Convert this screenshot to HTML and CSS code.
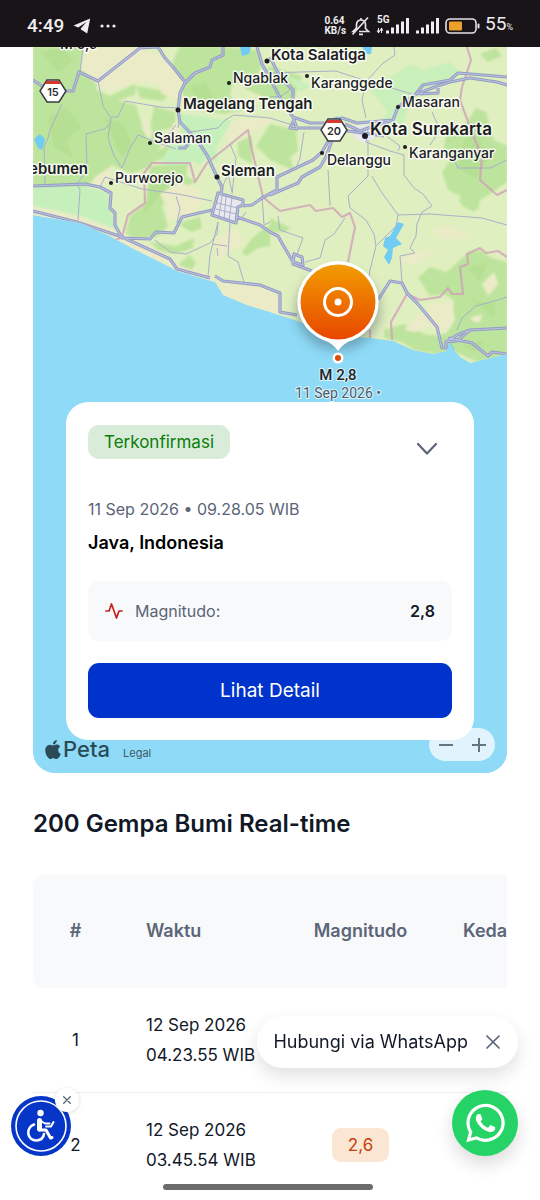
FILE: index.html
```html
<!DOCTYPE html>
<html lang="id">
<head>
<meta charset="utf-8">
<meta name="viewport" content="width=device-width, initial-scale=1">
<title>Gempa Bumi Real-time</title>
<link rel="stylesheet" href="styles.css">
</head>
<body>
<header class="status">
  <div class="status-side">
    <span class="clock">4:49</span>
    <svg width="18" height="16" viewBox="0 0 18 16" fill="#efedf0"><path d="M17.200 0.500 L0.500 7.600 L5.200 9.600 L13.500 4 L7.800 10.600 L7.900 11.400 L14.200 15.500 Z"/></svg>
    <svg width="16" height="4" viewBox="0 0 16 4" fill="#efedf0"><circle cx="2" cy="2" r="1.600"/><circle cx="8" cy="2" r="1.600"/><circle cx="14" cy="2" r="1.600"/></svg>
  </div>
  <div class="status-side status-right">
    <span class="rate">0.64<br>KB/s</span>
    <svg width="20" height="20" viewBox="0 0 20 20" fill="none" stroke="#e4e2e6" stroke-width="1.700"><path d="M5.500 14 V8.500 C5.500 2.500 14.500 2.500 14.500 8.500 V12.500 L17.500 15.500 H8 M5 15.500 H2 L5.500 12 M1.500 18.500 L17 1.500 M8 18.300 H12 M10 2 V4"/></svg>
    <span class="network"><span class="gen">5G</span>
      <svg width="34" height="17" viewBox="0 0 34 17" fill="#efedf0"><path d="M2.500 11 V15.500 M5.500 16 V11.500" stroke="#efedf0"/><path d="M.5 13.500 H4.500 L2.500 16.500 Z M3.500 13.500 H7.500 L5.500 10.500 Z"/><rect x="10" y="13.500" width="3" height="3"/><rect x="15" y="10.500" width="3" height="6"/><rect x="20" y="7.500" width="3" height="9"/><rect x="25" y="4.500" width="3" height="12"/><rect x="30" y="1" width="3" height="15.500"/></svg>
    </span>
    <svg width="25" height="17" viewBox="0 0 25 17" fill="#efedf0"><rect x="1" y="13.500" width="3" height="3"/><rect x="6" y="10.500" width="3" height="6"/><rect x="11" y="7.500" width="3" height="9"/><rect x="16" y="4.500" width="3" height="12"/><rect x="21" y="1" width="3" height="15.500"/></svg>
    <svg class="battery" width="35" height="16" viewBox="0 0 35 16"><rect x="1" y="1" width="30" height="14" rx="4" fill="none" stroke="#e4e2e6" stroke-width="1.600"/><rect x="4" y="3.500" width="13" height="9" rx="1" fill="#eba02b"/><rect x="32.500" y="5.500" width="2" height="5" rx="1" fill="#e4e2e6"/></svg>
    <span class="percent">55<small>%</small></span>
  </div>
</header>

<main class="page">
  <section class="map" aria-label="Peta gempa">
    <svg class="map-art" viewBox="33 47 474 726" preserveAspectRatio="xMidYMin slice">
      <defs>
        <linearGradient id="pin" x1="0" y1="0" x2="0" y2="1"><stop offset="0" stop-color="#f29c00"/><stop offset="1" stop-color="#e84700"/></linearGradient>
        <filter id="shade" x="-50%" y="-50%" width="200%" height="200%"><feGaussianBlur stdDeviation="6"/></filter>
        <filter id="soft"><feGaussianBlur stdDeviation="1.200"/></filter>
        <clipPath id="coast"><path d="M33 215 L80 223 L110 236 L130 247 L170 267 L177 271 L215 282 L223 295 L247 305 L270 312 L300 322 L336 336 L370 338 L393 341 L413 350 L433 354 L446 351 L450 344 L454 350 L460 357 L470 363 L490 358 L507 354 V40 H33 Z"/></clipPath>
      </defs>
      <rect x="33" y="47" width="474" height="726" fill="#8fdaf7"/>
      <g clip-path="url(#coast)">
        <rect x="33" y="47" width="474" height="330" fill="#e0efbf"/>
        <g filter="url(#soft)">
          <path fill="#bde49c" d="M33 47 H84 L80 70 L98 81 L96 90 L110 96 L135 84 L136 94 L118 101 L136 105 L142 125 L150 130 L154 106 L175 112 L176 128 L160 130 L174 146 L164 158 L152 163 L146 168 L132 174 L112 165 L98 178 L84 188 L33 186 Z"/>
          <path fill="#c6f0bb" d="M33 186 H84 L108 193 L112 214 L120 236 L80 222 L33 212 Z"/>
          <path fill="#c6f0bb" d="M180 114 L232 120 L216 148 L218 162 L207 158 L200 165 L182 155 L176 140 Z M172 142 L194 154 L190 167 L160 164 Z"/>
          <path fill="#bde49c" d="M150 166 L188 164 L186 176 L196 182 L176 190 L162 206 L168 226 L158 236 L124 240 L130 216 L146 203 Z"/>
          <path fill="#bde49c" d="M180 47 H222 L256 50 L262 64 L256 80 L232 84 L230 96 L244 110 L224 114 L204 112 L192 96 L184 100 L182 88 L170 74 L175 56 Z"/>
          <path fill="#bde49c" d="M270 66 L288 72 L302 76 L296 92 L290 106 L270 100 L244 88 Z M270 124 L296 130 L298 150 L290 158 L294 170 L270 160 L256 146 Z M238 142 L252 136 L252 164 L238 156 Z"/>
          <path fill="#bde49c" d="M136 86 L158 90 L170 94 L162 101 L140 98 Z M182 222 L200 217 L202 228 L192 232 L181 226 Z M150 242 L176 246 L194 238 L193 248 L176 254 L158 250 Z M181 262 L190 255 L196 263 L192 270 L178 269 Z M270 225 L262 230 L252 238 L242 252 L246 256 L258 248 L270 246 Z"/>
          <path fill="#c9efbb" d="M366 84 L392 76 L410 64 L424 70 L450 62 L462 74 L436 82 L422 90 L410 104 L402 128 L372 128 L388 112 Z M284 74 L312 86 L300 92 Z"/>
          <path fill="#bde49c" d="M480 54 L496 48 L502 56 L488 62 Z M446 134 L466 124 L476 108 L486 112 L494 140 L507 146 V182 L490 194 L480 200 L474 212 L462 206 L460 196 L448 190 L442 172 L450 160 L444 148 Z M458 200 L480 200 L478 210 L466 208 Z"/>
          <path fill="#bde49c" d="M418 278 L430 267 L446 272 L456 264 L468 252 L480 250 L492 258 L507 262 V356 L490 360 L478 362 L464 356 L450 350 L436 354 L414 350 L402 342 L384 338 L384 330 L404 324 L424 334 L440 336 L452 326 L454 300 L444 294 L430 296 Z"/>
          <path fill="#bde49c" d="M270 218 L290 228 L286 232 L270 232 Z"/>
          <path fill="#ecebc8" d="M84 49 L136 48 L164 57 L184 82 L178 100 L162 94 L158 84 L136 82 L110 92 L98 86 L82 70 Z M226 132 L236 120 L270 118 V124 L250 130 L230 144 Z M160 194 L180 182 L194 188 L204 200 L190 216 L170 220 L166 206 Z M33 206 L80 216 L122 232 L172 258 L180 266 L214 276 V284 L176 274 L122 247 L80 226 L33 218 Z M216 280 L262 284 L280 298 L282 316 L246 306 L224 296 Z M146 116 L152 132 L150 142 L142 128 Z M158 150 L184 138 L176 120 L164 140 Z M96 176 L112 166 L108 184 L88 188 Z"/>
          <path fill="#ecebc8" d="M418 316 L430 304 L452 302 L455 320 L446 334 L428 326 Z M482 284 L494 272 L498 284 L488 296 Z M470 318 L482 314 L480 322 L474 322 Z M404 330 L420 314 L428 326 L416 332 Z M396 262 L414 252 L436 250 L418 264 Z M430 228 L448 226 L470 236 L446 240 Z M214 240 L236 228 L244 244 L226 252 L218 262 Z"/>
          <path fill="#a6d685" opacity="0.350" d="M40 52 L62 48 L74 60 L58 72 Z M48 118 L66 108 L82 126 L66 140 L74 158 L54 148 Z M104 118 L124 124 L132 144 L122 158 L112 136 Z M190 86 L206 82 L214 100 L200 108 Z M150 176 L170 172 L166 188 L142 216 L148 196 Z M464 140 L478 132 L488 158 L476 178 L458 168 Z M468 268 L488 262 L480 282 Z M470 300 L496 304 L494 318 L482 308 Z M462 346 L486 340 L474 352 Z"/>
        </g>
        <path fill="#70ccf3" d="M240 47 H251 L249 54 L242 56 Z M34 139 L40 134 L45 139 L42 150 L38 148 Z M362 47 H372 L371 54 H365 Z M398 222 L404 224 L396 238 L402 244 L393 248 L392 258 L389 265 L384 257 L388 250 L383 246 L385 238 L390 236 Z M333 118 L338 116 L337 124 Z M446 347 L451 343 L455 350 L450 353 Z"/>
        <path fill="#e9e8ee" d="M220 195 L242 202 L235 221 L214 214 Z M352 126 L368 125 L378 136 L364 143 L354 137 Z"/>
        <g fill="none" stroke="#a9afca" stroke-width="1" stroke-linejoin="round">
          <path d="M83 47 L80 72 M98 81 L103 106 L111 118 L108 138 L114 156 L122 168 L130 148 L138 135 L156 142 L176 149 M111 117 L118 117 L125 101 L160 107 L178 108 M62 104 L50 130 L48 138 L44 146 L45 184 M109 125 L104 129 L86 134 L87 170 L77 184 L80 190 L78 220 M100 187 L105 177 L142 189 L178 194 L212 201 M176 196 L180 208 L177 223 M155 240 L170 252 L186 254 L210 243 L217 234 L218 222 L210 255 L208 276 M217 248 L218 256 M230 222 L228 256 L238 262 L244 282 M212 244 L227 246"/>
          <path d="M190 132 L218 128 L225 120 L234 115 L270 118 L296 126 M222 188 L228 174 L232 192 M230 144 L236 158 L232 194 M262 196 L264 225 L270 222 M176 125 L166 138 M180 116 L178 128 M304 132 L300 158 L296 168 M270 73 L300 72 L336 71 L354 77 L412 94 M366 118 L362 100 L366 82 L382 64 L395 55 L394 47 M368 130 L366 142 L390 151 L404 155 L404 175 L414 188 L423 194 L432 206 L422 212 L417 224 L416 236 L410 248 L415 253 L400 256 L402 282"/>
          <path d="M368 140 L368 176 L348 196 L350 208 L366 220 L374 234 L376 246 L370 270 L366 300 M372 176 L380 190 L398 215 L430 214 L482 218 L507 225 M398 215 L396 226 L377 245 M328 170 L330 206 M345 218 L334 234 L325 240 L320 258 L305 262 M278 216 L280 230 L303 238 L297 254 M374 127 L400 146 L398 151 M430 145 L440 130 L432 112 M452 156 L458 168 L490 168 L507 160 M457 330 L462 318 L476 306 L498 300 L507 297 M270 97 L282 96 L292 88 M222 196 L219 216 M226 197 L224 219 M232 198 L229 221 M217 203 L238 208 M216 209 L236 214 M240 220 L246 212"/>
        </g>
        <path fill="none" stroke="#cf9eba" stroke-opacity="0.750" stroke-width="2.200" stroke-linejoin="round" d="M113 241 L122 237 L128 215 L145 203 L144 173 L152 163 L190 163 L195 182 L207 163 L248 130 L252 150 L263 197 L270 203 L280 211 L290 209 L310 205 L316 211 L333 208 L342 217 L350 213 L355 227 L348 262 M370 330 V340 M392 340 L391 322 L407 294 L420 300 L440 297 L448 288 L452 294 L463 294 L460 267 L468 264 L467 254 L480 248 L486 253 L498 251 L507 257 M467 47 L471 60 L462 87 L460 100 L470 127 L482 157 L480 180 L497 195 L507 190"/>
        <g fill="none" stroke-linejoin="round">
          <g stroke="#939cc4" stroke-width="3.200">
            <path id="roads" d="M33 80 L42 86 M65 91 H73 L79 72 L98 81 L140 48 L158 47 L165 58 L173 67 L185 82 M223 47 V55 L212 60 L210 67 L195 73 L185 83 L180 93 L178 110 L180 122 L197 140 L207 155 L217 177 L222 187 L221 195 M218 193 L243 200 V205 L238 207 L236 223 L212 215 Z M243 206 L252 205 L262 198 L277 190 V177 L313 160 L322 152 L330 138 M270 195 L298 183 L302 177 L320 167 L326 157 L333 138 M237 217 L260 225 L270 232 L278 236 L283 245 L293 262 L303 265 L302 257 L294 254 L293 264 L312 271 M212 210 L182 217 L174 233 L156 232 L150 239 L122 238 L115 225 V213 L110 208 L111 193 L100 187 L85 184 L33 186 M33 211 L77 222 L122 237 L170 259 L177 269 L210 278 M215 276 L223 281 L260 285 L280 293 V312 L297 315 M378 300 L390 281 L402 283 L407 293 L417 303 L437 327 L442 348 L446 348 L446 342 L457 335 L470 330 L507 328 M446 342 L457 341 L470 330 M448 338 L472 343 L488 356 L492 352 L507 354"/>
            <path id="toll" d="M257 47 L262 64 L283 103 L293 117 L310 123 H327 L342 118 L357 123 L393 120 L398 107 L415 95 L423 85 L450 80 L458 73 L507 77 M293 117 L297 129 L290 128 L294 120 M297 128 H330 L355 132 L384 136 M345 124 L360 131 L368 128 L390 121 M417 94 L437 86 L450 82 L470 78 L497 82 L507 85 M420 94 L438 93 V88 M270 57 L280 77 L293 90 V100 M178 148 L185 148 L189 143"/>
          </g>
          <g stroke="#bac0de" stroke-width="1.200"><use href="#roads"/><use href="#toll"/></g>
        </g>
      </g>
      <g class="shield">
        <path d="M47 80 H59 L66 91 L59 102 H47 L40 91 Z"/><path class="shield-top" d="M47 81 H59 L61 84 H45 Z"/><text x="53" y="96">15</text>
        <path d="M328 119 H340 L347 130 L340 141 H328 L321 130 Z"/><path class="shield-top" d="M328 120 H340 L342 123 H326 Z"/><text x="334" y="135">20</text>
      </g>
      <g fill="#1d1d1f"><circle cx="229" cy="83" r="2"/><circle cx="307" cy="76" r="2"/><circle cx="267" cy="61" r="2.500"/><circle cx="178" cy="110" r="2.500"/><circle cx="150" cy="143" r="2"/><circle cx="111" cy="183" r="2"/><circle cx="217" cy="177" r="2.500"/><circle cx="398" cy="107" r="2"/><circle cx="365" cy="136" r="3"/><circle cx="405" cy="147" r="2"/><circle cx="322" cy="153" r="2"/></g>
      <g class="places">
        <text x="60" y="49">M 6,9</text>
        <text x="233" y="83">Ngablak</text>
        <text x="311" y="88">Karanggede</text>
        <text x="402" y="107">Masaran</text>
        <text x="154" y="143">Salaman</text>
        <text x="115" y="183">Purworejo</text>
        <text x="327" y="165">Delanggu</text>
        <text x="409" y="158">Karanganyar</text>
        <g class="towns">
          <text x="271" y="60">Kota Salatiga</text>
          <text x="183" y="109">Magelang Tengah</text>
          <text x="221" y="176">Sleman</text>
          <text x="88" y="174" text-anchor="end">Kebumen</text>
          <text class="city" x="370" y="135">Kota Surakarta</text>
        </g>
      </g>
      <ellipse cx="338" cy="310" rx="42" ry="40" fill="#35505c" opacity="0.400" filter="url(#shade)"/>
      <path fill="#fff" d="M338 261 A41 41 0 0 1 353 340 Q343 343 338 351 Q333 343 323 340 A41 41 0 0 1 338 261 Z"/>
      <circle cx="338" cy="302" r="37.500" fill="url(#pin)"/>
      <circle cx="338" cy="302" r="13.500" fill="none" stroke="#fff" stroke-width="3"/><circle cx="338" cy="302" r="3.500" fill="#fff"/>
      <circle cx="338" cy="358" r="5.500" fill="#fff"/><circle cx="338" cy="358" r="3" fill="#e0480a"/>
      <g class="quake"><text class="quake-mag" x="338" y="380">M 2,8</text><text x="338" y="398">11 Sep 2026 •</text></g>
    </svg>

    <article class="card">
      <div class="card-head">
        <span class="confirmed">Terkonfirmasi</span>
        <button class="collapse" aria-label="Tutup detail"><svg width="22" height="14" viewBox="0 0 22 14" fill="none" stroke="#5b6478" stroke-width="2.200" stroke-linecap="round" stroke-linejoin="round"><path d="M2 2 L11 11.500 L20 2"/></svg></button>
      </div>
      <p class="when">11 Sep 2026 • 09.28.05 WIB</p>
      <h2 class="where">Java, Indonesia</h2>
      <div class="fact">
        <svg width="18" height="18" viewBox="0 0 18 18" fill="none" stroke="#c81e1e" stroke-width="1.700" stroke-linecap="round" stroke-linejoin="round"><path d="M1 9 H4 L6.500 2 L11.500 16 L14 9 H17"/></svg>
        <span>Magnitudo:</span>
        <strong class="fact-value">2,8</strong>
      </div>
      <button class="detail">Lihat Detail</button>
    </article>

    <div class="map-foot">
      <span class="brand"><svg width="16" height="19" viewBox="2 0 20 24" fill="#2b4a57"><path d="M12.152 6.896c-.948 0-2.415-1.078-3.960-1.040-2.040.027-3.910 1.183-4.961 3.014-2.117 3.675-.546 9.103 1.519 12.090 1.013 1.454 2.208 3.090 3.792 3.039 1.520-.065 2.090-.987 3.935-.987 1.831 0 2.350.987 3.960.948 1.637-.026 2.676-1.480 3.676-2.948 1.156-1.688 1.636-3.325 1.662-3.415-.039-.013-3.182-1.221-3.220-4.857-.026-3.040 2.480-4.494 2.597-4.559-1.429-2.090-3.623-2.324-4.390-2.376-2-.156-3.675 1.090-4.610 1.090zM15.530 3.830c.843-1.012 1.400-2.427 1.245-3.830-1.207.052-2.662.805-3.532 1.818-.780.896-1.454 2.338-1.273 3.714 1.338.104 2.715-.688 3.559-1.701"/></svg>Peta</span>
      <a class="legal" href="#legal">Legal</a>
      <div class="zoom">
        <button aria-label="Perkecil"><svg width="16" height="16" viewBox="0 0 16 16" stroke="#66757d" stroke-width="2"><path d="M1 8 H15"/></svg></button>
        <button aria-label="Perbesar"><svg width="16" height="16" viewBox="0 0 16 16" stroke="#66757d" stroke-width="2"><path d="M1 8 H15 M8 1 V15"/></svg></button>
      </div>
    </div>
  </section>

  <h1 class="title">200 Gempa Bumi Real-time</h1>

  <div class="table-wrap">
    <table class="quakes">
      <colgroup><col class="col-no"><col class="col-time"><col class="col-mag"><col class="col-depth"></colgroup>
      <thead><tr><th class="mid">#</th><th>Waktu</th><th class="mid">Magnitudo</th><th>Kedalaman</th></tr></thead>
      <tbody>
        <tr><td class="mid">1</td><td>12 Sep 2026<br>04.23.55 WIB</td><td></td><td></td></tr>
        <tr><td class="mid">2</td><td>12 Sep 2026<br>03.45.54 WIB</td><td class="mid"><span class="mag">2,6</span></td><td></td></tr>
      </tbody>
    </table>
  </div>
</main>

<div class="chat-tip"><span>Hubungi via WhatsApp</span><button aria-label="Tutup pesan"><svg width="14" height="14" viewBox="0 0 14 14" fill="none" stroke="#5b6478" stroke-width="1.700" stroke-linecap="round"><path d="M1 1 L13 13 M13 1 L1 13"/></svg></button></div>
<button class="chat" aria-label="WhatsApp"><svg width="39" height="44" viewBox="0 0 448 512" fill="#fff"><path d="M380.900 97.100C339 55.100 283.200 32 223.900 32c-122.400 0-222 99.600-222 222 0 39.100 10.200 77.300 29.600 111L0 480l117.700-30.900c32.400 17.700 68.900 27 106.100 27h.1c122.300 0 224.100-99.600 224.100-222 0-59.300-25.200-115-67.100-157zm-157 341.600c-33.200 0-65.700-8.900-94-25.700l-6.700-4-69.800 18.300L72 359.200l-4.400-7c-18.500-29.400-28.200-63.300-28.200-98.200 0-101.700 82.800-184.500 184.600-184.500 49.300 0 95.600 19.200 130.400 54.100 34.800 34.900 56.200 81.200 56.100 130.500 0 101.800-84.900 184.600-186.600 184.600zm101.200-138.200c-5.500-2.800-32.800-16.200-37.900-18-5.100-1.900-8.800-2.800-12.500 2.800-3.700 5.600-14.300 18-17.600 21.800-3.200 3.700-6.500 4.200-12 1.400-32.600-16.300-54-29.100-75.500-66-5.700-9.800 5.700-9.100 16.300-30.300 1.800-3.700.9-6.900-.5-9.700-1.400-2.800-12.500-30.100-17.100-41.200-4.500-10.800-9.100-9.300-12.500-9.500-3.200-.2-6.900-.2-10.600-.2-3.700 0-9.700 1.400-14.800 6.900-5.100 5.600-19.400 19-19.400 46.300 0 27.300 19.900 53.700 22.600 57.400 2.800 3.700 39.100 59.700 94.800 83.800 35.200 15.200 49 16.500 66.600 13.900 10.700-1.600 32.800-13.400 37.400-26.400 4.600-13 4.600-24.100 3.200-26.400-1.300-2.500-5-3.900-10.500-6.600z"/></svg></button>

<div class="access">
  <button class="access-open" aria-label="Aksesibilitas"><svg width="60" height="60" viewBox="0 0 60 60"><circle cx="30" cy="30" r="30" fill="#0636c8"/><circle cx="30" cy="30" r="25" fill="none" stroke="#fff" stroke-width="1.600"/><g fill="none" stroke="#fff" stroke-linecap="round" stroke-linejoin="round"><path stroke-width="2.600" d="M23 28.500 C14 32 16 45 26 44.500 C30.500 44 32.500 41 33 38"/><path stroke-width="5" d="M28.500 24.500 V33"/><path stroke-width="3" d="M28.500 34 H35 L39.500 42 L41 41.500"/><path stroke-width="2" d="M30 25 L34 27.500 H38.500 M35 30.500 H40 L42.500 26"/></g><circle cx="29.500" cy="17" r="3.200" fill="#fff"/></svg></button>
  <button class="access-close" aria-label="Sembunyikan"><svg width="8" height="8" viewBox="0 0 8 8" stroke="#5b6478" stroke-width="1.300" stroke-linecap="round"><path d="M.7 .7 L7.300 7.300 M7.300 .7 L.7 7.300"/></svg></button>
</div>
<div class="gesture"></div>
</body>
</html>
```

FILE: styles.css
```css
* { box-sizing: border-box; }

body {
  margin: 0;
  background: #fff;
  color: #111827;
  font-family: Inter, "Noto Sans", sans-serif;
  font-size: 17px;
  line-height: 24px;
}

button {
  border: 0;
  padding: 0;
  background: none;
  font: inherit;
  display: flex;
  align-items: center;
  justify-content: center;
}

svg { display: block; flex: none; }
h1, h2, p { margin: 0; }

/* Device status bar */
.status {
  display: flex;
  justify-content: space-between;
  align-items: center;
  height: 47px;
  padding: 4px 27px 0;
  background: #181418;
  color: #efedf0;
  font-family: Roboto, sans-serif;
}
.status-side { display: flex; align-items: center; gap: 9px; }
.status-right { gap: 5px; }
.clock { font-size: 19px; font-weight: 500; }
.rate { font-size: 10px; line-height: 10px; font-weight: 700; }
.network { position: relative; }
.gen { position: absolute; top: -2px; left: 1px; font-size: 10px; line-height: 10px; font-weight: 700; }
.percent { font-size: 19px; }
.percent small { font-size: 9px; }

.page { padding: 0 33px; }

/* Map */
.map {
  position: relative;
  overflow: hidden;
  padding: 355px 33px 0;
  border-radius: 0 0 22px 22px;
  background: #8fdaf7;
}
.map-art { position: absolute; inset: 0; width: 100%; height: 100%; }
.places {
  font-size: 14px;
  font-weight: 500;
  fill: #1d1d1f;
  stroke: #fff;
  stroke-opacity: 0.8;
  stroke-width: 3px;
  stroke-linejoin: round;
  paint-order: stroke;
}
.towns { font-size: 15px; font-weight: 600; }
.city { font-size: 17px; }
.shield { fill: #fff; stroke: #3c3c40; stroke-width: 1.5px; }
.shield-top { fill: #d8362f; stroke: none; }
.shield text { fill: #2c2c30; stroke: none; font-size: 11px; font-weight: 600; text-anchor: middle; }
.quake {
  font-family: Roboto, sans-serif;
  font-size: 14px;
  text-anchor: middle;
  fill: #4d5b66;
  stroke: #fff;
  stroke-opacity: 0.7;
  stroke-width: 2px;
  paint-order: stroke;
}
.quake-mag { font-size: 15px; font-weight: 500; fill: #22262a; }

/* Event card */
.card {
  position: relative;
  z-index: 1;
  padding: 23px 22px 22px;
  border-radius: 22px;
  background: #fff;
}
.card-head { display: flex; justify-content: space-between; align-items: flex-start; }
.confirmed {
  padding: 5px 16px;
  border-radius: 11px;
  background: #d9ecda;
  color: #0a7d0a;
  line-height: 24px;
}
.collapse { width: 50px; height: 48px; }
.when { margin-top: 24px; color: #5b6478; font-size: 16px; }
.where { margin-top: 10px; color: #000; font-size: 18px; line-height: 24px; font-weight: 600; }
.fact {
  display: flex;
  align-items: center;
  gap: 12px;
  margin-top: 26px;
  padding: 18px 17px;
  border-radius: 11px;
  background: #f8f9fb;
  color: #5b6478;
  font-size: 16px;
}
.fact-value { margin-left: auto; color: #111827; font-weight: 600; }
.detail {
  width: 100%;
  margin-top: 22px;
  padding: 15px;
  border-radius: 11px;
  background: #0033cc;
  color: #fff;
  font-size: 19px;
  line-height: 25px;
}

.map-foot {
  display: flex;
  align-items: flex-start;
  gap: 13px;
  margin: -12px -21px 0;
  padding-bottom: 12px;
  position: relative;
}
.brand { display: flex; align-items: center; gap: 2px; padding-top: 9px; color: #2b4a57; font-size: 22px; font-weight: 500; }
.legal { padding-top: 17px; color: #3f5a66; font-size: 11px; line-height: 16px; text-decoration: none; }
.zoom {
  display: flex;
  margin-left: auto;
  border-radius: 17px;
  background: #e1f4fd;
}
.zoom button { width: 33px; height: 33px; }

/* Real-time table */
.title { margin: 35px 0; font-size: 24px; line-height: 32px; font-weight: 600; }
.table-wrap { overflow: hidden; border-radius: 11px 0 0 0; }
.quakes { width: 600px; min-width: 100%; table-layout: fixed; border-collapse: collapse; }
.col-no { width: 85px; }
.col-time { width: 168px; }
.col-mag { width: 149px; }
.quakes th {
  padding: 44px 28px 45px;
  background: #f8f9fb;
  color: #5b6678;
  font-size: 18px;
  font-weight: 600;
  text-align: left;
}
.quakes th:first-child { border-radius: 11px 0 0 11px; }
.quakes td { padding: 22px 28px; line-height: 30px; }
.quakes tbody tr + tr td { border-top: 1px solid #eceef1; }
.quakes .mid { padding-left: 0; padding-right: 0; text-align: center; }
.mag {
  display: inline-block;
  padding: 2px 16px;
  border-radius: 9px;
  background: #fbe6d3;
  color: #c2410c;
}

/* Floating controls */
.chat-tip {
  position: fixed;
  right: 22px;
  bottom: 132px;
  display: flex;
  align-items: center;
  gap: 8px;
  padding: 14px 8px 14px 16px;
  border-radius: 26px;
  background: #fff;
  font-size: 18px;
  box-shadow: 0 8px 18px rgba(0, 0, 0, 0.12);
}
.chat-tip button { width: 34px; height: 24px; }
.chat {
  position: fixed;
  right: 22px;
  bottom: 44px;
  width: 66px;
  height: 66px;
  border-radius: 50%;
  background: #25d366;
  box-shadow: 0 8px 18px rgba(0, 0, 0, 0.14);
}
.access { position: fixed; left: 11px; bottom: 44px; }
.access-close {
  position: absolute;
  top: -8px;
  right: -8px;
  width: 24px;
  height: 24px;
  border-radius: 50%;
  background: #fff;
  box-shadow: 0 1px 4px rgba(0, 0, 0, 0.15);
}
.gesture {
  position: fixed;
  left: 50%;
  bottom: 10px;
  width: 210px;
  height: 6px;
  margin-left: -107px;
  border-radius: 3px;
  background: #6b6b6b;
}
```
